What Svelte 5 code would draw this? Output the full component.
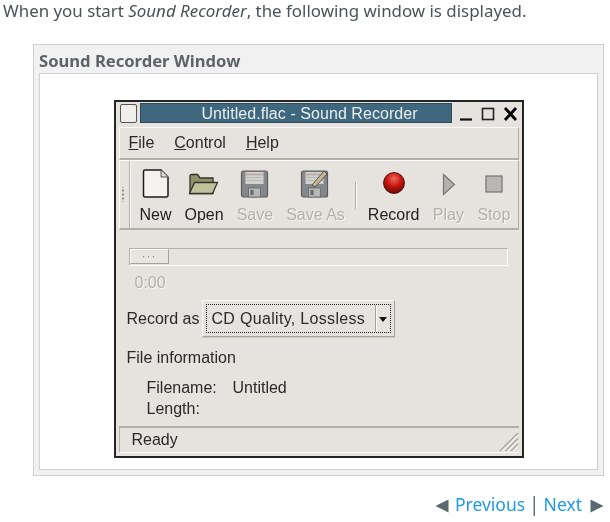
<script>
  const tools = [
    { label: 'New', icon: 'new' },
    { label: 'Open', icon: 'open' },
    { label: 'Save', icon: 'save', off: true },
    { label: 'Save As', icon: 'saveas', off: true },
    { sep: true },
    { label: 'Record', icon: 'record' },
    { label: 'Play', icon: 'play', off: true },
    { label: 'Stop', icon: 'stop', off: true }
  ];
</script>

<main class="page">
  <p class="intro">When you start <em>Sound Recorder</em>, the following window is displayed.</p>

  <section class="figure">
    <h4 class="figure-title">Sound Recorder Window</h4>
    <div class="figure-body">
      <div class="window">
        <div class="titlebar">
          <span class="win-menu"></span>
          <span class="win-title">Untitled.flac - Sound Recorder</span>
          <span class="win-buttons">
            <svg width="60" height="20" viewBox="0 0 60 20" aria-hidden="true">
              <path d="M2 16.500h12" stroke="#111" stroke-width="2.200" fill="none" />
              <rect x="24.500" y="5.500" width="11" height="11" stroke="#222" stroke-width="1.600" fill="none" />
              <path d="M47 5l11 12M58 5L47 17" stroke="#000" stroke-width="2.800" fill="none" />
            </svg>
          </span>
        </div>

        <nav class="menubar">
          <span><u>F</u>ile</span>
          <span><u>C</u>ontrol</span>
          <span><u>H</u>elp</span>
        </nav>

        <div class="toolbar">
          <span class="handle"></span>
          <div class="tools">
            {#each tools as t}
              {#if t.sep}
                <span class="sep"></span>
              {:else}
                <div class="tool" class:off={t.off}>
                  <svg class="ico" width="32" height="32" viewBox="0 0 32 32" aria-hidden="true">
                    {#if t.icon === 'new'}
                      <path d="M3.500 3.500a1.500 1.500 0 0 1 1.500-1.500h16l7 7v18.500a1.500 1.500 0 0 1-1.500 1.500H5a1.500 1.500 0 0 1-1.500-1.500z" fill="#f4f3f1" stroke="#1c1c1c" stroke-width="1.500" />
                      <path d="M21 2v7h7" fill="#dbd9d5" stroke="#555" stroke-width="1" />
                    {:else if t.icon === 'open'}
                      <path d="M2 8a1.500 1.500 0 0 1 1.500-1.500h6L12 10h13v15.500H2z" fill="#8f9468" stroke="#33352a" stroke-width="1.300" />
                      <path d="M1.500 25.500L6.500 14.500h23L24.500 25.500z" fill="#bfc39c" stroke="#33352a" stroke-width="1.300" />
                    {:else if t.icon === 'save' || t.icon === 'saveas'}
                      <rect x="2.500" y="3" width="26" height="26" rx="2" fill="#85888b" stroke="#5c5c5c" stroke-width="1.200" />
                      <rect x="6.500" y="4" width="18" height="12" fill="#d2d0cc" />
                      <path d="M6.500 6.500h18" stroke="#b5a5a5" stroke-width="1.500" />
                      <path d="M6.500 9.500h18M6.500 12.500h18" stroke="#bcbab6" stroke-width="1" />
                      <rect x="9.500" y="20" width="12" height="9" fill="#b5b6b6" stroke="#666" stroke-width="0.800" />
                      <rect x="11.500" y="22" width="3" height="5" fill="#666" />
                      {#if t.icon === 'saveas'}
                        <path d="M13 17L25 3l3 3-12 13z" fill="#c4b892" stroke="#555" stroke-width="1" />
                      {/if}
                    {:else if t.icon === 'record'}
                      <defs>
                        <radialGradient id="rec" cx="0.5" cy="0.3" r="0.7">
                          <stop offset="0" stop-color="#f06a5c" />
                          <stop offset="0.5" stop-color="#c8160f" />
                          <stop offset="1" stop-color="#6d0705" />
                        </radialGradient>
                      </defs>
                      <circle cx="16" cy="15" r="10.500" fill="url(#rec)" stroke="#3a0503" stroke-width="0.800" />
                    {:else if t.icon === 'play'}
                      <path d="M11.500 6.500L22.500 16.500L11.500 26.500z" fill="#b4b2ae" stroke="#77756f" stroke-width="1.200" />
                    {:else}
                      <rect x="8" y="8" width="16" height="16" fill="#b9b7b3" stroke="#75736e" stroke-width="1.200" />
                    {/if}
                  </svg>
                  <span class="tool-label">{t.label}</span>
                </div>
              {/if}
            {/each}
          </div>
        </div>

        <div class="content">
          <div class="slider"><span class="thumb">···</span></div>
          <div class="time">0:00</div>
          <div class="record-row">
            <span>Record as</span>
            <div class="combo">
              <div class="combo-focus">
                <span class="combo-text">CD Quality, Lossless</span>
                <span class="combo-arrow"></span>
              </div>
            </div>
          </div>
          <div class="info-head">File information</div>
          <dl class="info">
            <dt>Filename:</dt><dd>Untitled</dd>
            <dt>Length:</dt><dd></dd>
          </dl>
        </div>

        <div class="statusbar">
          <span>Ready</span>
          <svg class="grip" width="20" height="20" viewBox="0 0 20 20" aria-hidden="true">
            <path d="M19 1L1 19M19 6.500L6.500 19M19 12L12 19" stroke="#a8a49c" stroke-width="1.300" />
            <path d="M19 3L3 19M19 8.500L8.500 19M19 14L14 19" stroke="#fbfaf8" stroke-width="1" />
          </svg>
        </div>
      </div>
    </div>
  </section>

  <footer class="pager">
    <svg class="arrow prev" width="14" height="14" viewBox="0 0 14 14" aria-hidden="true"><path d="M13.500 0.500v13L0.500 7z" fill="#5a686f" /></svg>
    <a href="#prev">Previous</a>
    <span class="bar">|</span>
    <a href="#next">Next</a>
    <svg class="arrow" width="14" height="14" viewBox="0 0 14 14" aria-hidden="true"><path d="M0.500 0.500v13l13-6.500z" fill="#5a686f" /></svg>
  </footer>
</main>

<style>
  :global(body) {
    margin: 0;
    background: #fff;
  }

  .page {
    width: 610px;
    height: 522px;
    overflow: hidden;
    box-sizing: border-box;
    font-family: "Noto Sans", "Open Sans", sans-serif;
    color: #4a4f52;
    filter: blur(0.3px);
  }

  .intro {
    margin: 0;
    padding-left: 3px;
    height: 44px;
    font-size: 16.900px;
    line-height: 22px;
    white-space: nowrap;
    color: #4c5356;
  }

  .figure {
    margin-left: 33px;
    width: 571px;
    height: 432px;
    box-sizing: border-box;
    border: 1px solid #cfcfcf;
    background: #f1f1f1;
    padding: 0 5px 5px;
    display: flex;
    flex-direction: column;
  }

  .figure-title {
    margin: 0;
    height: 28px;
    line-height: 32px;
    font-size: 16.600px;
    font-weight: 700;
    color: #5d6468;
    white-space: nowrap;
  }

  .figure-body {
    flex: 1;
    background: #fff;
    border: 1px solid #cfcfcf;
    padding-top: 26px;
    display: flex;
    justify-content: center;
    align-items: flex-start;
  }

  .window {
    width: 410px;
    height: 358px;
    box-sizing: border-box;
    border: 2px solid #242424;
    background: #e6e3de;
    font-family: "Liberation Sans", Arial, sans-serif;
    font-size: 16px;
    color: #2a2a2a;
    padding: 0 3px;
    display: flex;
    flex-direction: column;
  }

  .titlebar {
    height: 22px;
    margin-top: 1px;
    display: flex;
    align-items: stretch;
    gap: 3px;
  }

  .win-menu {
    width: 15px;
    height: 17px;
    margin: 1px 0 0 1px;
    background: #f0eeea;
    border: 1px solid #555;
    border-radius: 2px;
  }

  .win-title {
    width: 312px;
    height: 20px;
    padding-left: 61px;
    background: #3f687f;
    color: #e9eef0;
    line-height: 19px;
    font-size: 16px;
    letter-spacing: 0.06px;
    white-space: nowrap;
    border: 1px solid #2d4a5a;
    box-sizing: border-box;
  }

  .win-buttons {
    display: block;
    margin-left: 3px;
    height: 20px;
  }

  .menubar {
    margin-top: 2px;
    height: 33px;
    box-sizing: border-box;
    border-top: 1px solid #fbfaf8;
    border-bottom: 2px solid #b3afa6;
    border-right: 1px solid #b3afa6;
    border-left: 1px solid #fbfaf8;
    display: flex;
    align-items: center;
    gap: 20px;
    padding-left: 9px;
  }

  .toolbar {
    height: 70px;
    box-sizing: border-box;
    border-bottom: 2px solid #b3afa6;
    border-top: 1px solid #fbfaf8;
    border-right: 1px solid #b3afa6;
    border-left: 1px solid #fbfaf8;
    display: flex;
  }

  .handle {
    width: 9px;
    border-right: 1px solid #b3afa6;
    box-shadow: 1px 0 0 #fbfaf8;
    background-image: radial-gradient(circle, #8f8b83 0.8px, transparent 1px);
    background-size: 4px 4px;
    background-repeat: repeat-y;
    background-position: 1px center;
    background-clip: content-box;
    padding: 26px 0;
  }

  .tools {
    display: flex;
    gap: 13px;
    padding-left: 10px;
  }

  .tool {
    display: flex;
    flex-direction: column;
    align-items: center;
    height: 100%;
  }

  .ico {
    margin-top: 7px;
    height: 32px;
  }

  .tool-label {
    margin-top: 6px;
    line-height: 18px;
    white-space: nowrap;
    color: #222;
  }

  .tool.off .tool-label {
    color: #b3b0aa;
    text-shadow: 1px 1px 0 #f6f5f2;
  }

  .sep {
    width: 1px;
    height: 27px;
    margin: 21px -1px 0 -3px;
    background: #b3afa6;
    box-shadow: 1px 0 0 #fbfaf8;
  }

  .content {
    flex: 1;
    padding: 18px 11px 0 7px;
  }

  .slider {
    height: 18px;
    box-sizing: border-box;
    margin-left: 3px;
    background: #e6e3de;
    border: 1px solid #b3afa6;
    border-bottom-color: #fbfaf8;
    border-right-color: #fbfaf8;
    display: flex;
  }

  .thumb {
    width: 39px;
    height: 15px;
    box-sizing: border-box;
    background: #e8e5e0;
    border-right: 1px solid #a6a29a;
    border-bottom: 1px solid #a6a29a;
    border-top: 1px solid #fbfaf8;
    border-left: 1px solid #fbfaf8;
    font-size: 12px;
    line-height: 13px;
    text-align: center;
    color: #8f8b83;
    letter-spacing: 1px;
  }

  .time {
    margin: 8px 0 0 9px;
    line-height: 18px;
    color: #b3b0aa;
    text-shadow: 1px 1px 0 #f6f5f2;
  }

  .record-row {
    display: flex;
    align-items: center;
    gap: 3px;
    margin-top: 8px;
    margin-left: 1px;
  }

  .combo {
    width: 193px;
    height: 37px;
    box-sizing: border-box;
    border: 1px solid;
    border-color: #fbfaf8 #a6a29a #a6a29a #fbfaf8;
    padding: 3px;
    box-shadow: 0 1px 0 #c9c6bf;
  }

  .combo-focus {
    height: 100%;
    box-sizing: border-box;
    border: 1px dotted #222;
    display: flex;
    align-items: center;
    padding-left: 4px;
  }

  .combo-text {
    flex: 1;
    white-space: nowrap;
    letter-spacing: 0.02em;
  }

  .combo-arrow {
    width: 14px;
    height: 27px;
    border-left: 1px solid #a6a29a;
    box-shadow: inset 1px 0 0 #fbfaf8;
    position: relative;
    flex: none;
  }

  .combo-arrow::after {
    content: "";
    position: absolute;
    left: 3px;
    top: 12px;
    border: 4.500px solid transparent;
    border-top: 5px solid #111;
    border-bottom: 0;
  }

  .info-head {
    margin: 12px 0 0 1px;
    line-height: 18px;
  }

  .info {
    display: grid;
    grid-template-columns: 86px 1fr;
    grid-auto-rows: 21px;
    margin: 10px 0 0 21px;
    line-height: 21px;
  }

  dd,
  dt {
    margin: 0;
  }

  .statusbar {
    height: 27px;
    margin-top: auto;
    margin-bottom: 3px;
    box-sizing: border-box;
    border-top: 2px solid #b3afa6;
    border-left: 1px solid #b3afa6;
    border-bottom: 1px solid #fbfaf8;
    display: flex;
    align-items: center;
    justify-content: space-between;
    padding-left: 12px;
    line-height: 20px;
  }

  .grip {
    align-self: flex-end;
  }

  .pager {
    display: flex;
    justify-content: flex-end;
    align-items: center;
    gap: 8px;
    width: 604px;
    height: 26px;
    margin-top: 15px;
    font-size: 17.500px;
  }

  .pager a {
    color: #1e9ae8;
    text-decoration: none;
  }

  .arrow {
    margin-top: 3px;
  }

  .arrow.prev {
    margin-right: -2px;
  }

  .bar {
    color: #5a686f;
    font-size: 19px;
    margin: 0 -4px;
  }
</style>
